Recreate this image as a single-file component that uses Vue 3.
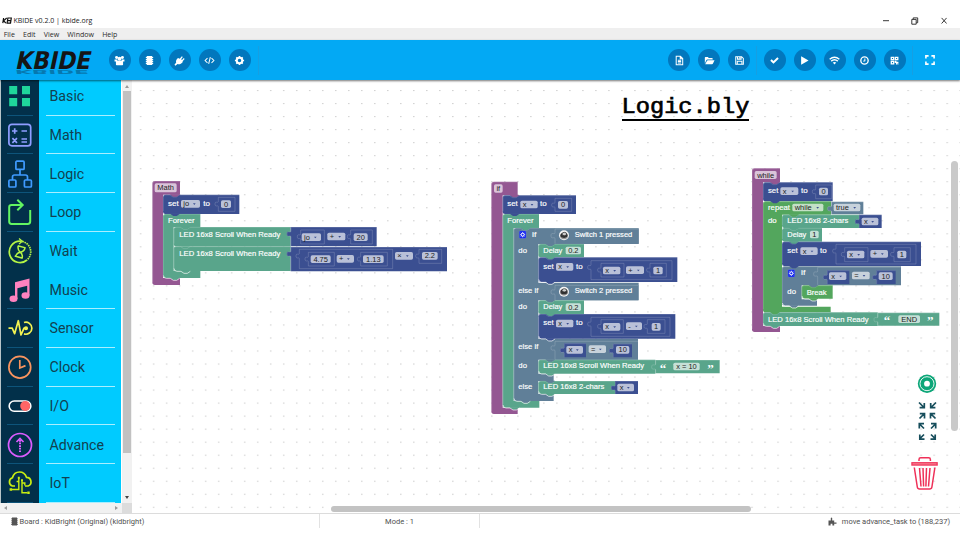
<script setup>
const P = '#945792', N = '#3b4f91', G = '#59a58b', S = '#607f98', L = '#53a65d'

const categories = ['Basic', 'Math', 'Logic', 'Loop', 'Wait', 'Music', 'Sensor', 'Clock', 'I/O', 'Advance', 'IoT']
const menus = ['File', 'Edit', 'View', 'Window', 'Help']

// Shape builders, in third-of-a-pixel units
const tab = (x, y, c) => ({ k: 'path', c, d: `M${x + 22} ${y - 1} h28 v1 l-9 6 h-10 l-9 -6 z` })
const frame = (x, y, r, iy, ix, ib, b, fr, c) => [
  { k: 'path', c, d: `M${x + 8} ${y} H${r} V${iy} H${ix} V${ib} H${fr} V${b} H${x + 8} q-8 0 -8 -8 V${y + 8} q0 -8 8 -8 z` },
  { k: 'edge', d: `M${x + 1} ${b - 9} V${y + 8} q0 -7 7 -7 H${r}` },
]
const stmt = (x, y, r, b, c) => [
  { k: 'path', c, d: `M${x + 7} ${y} H${r} V${b} H${x + 7} q-7 0 -7 -7 V${y + 7} q0 -7 7 -7 z` },
  { k: 'edge', d: `M${x + 1} ${b - 8} V${y + 7} q0 -6 6 -6 h14 l9 6 h10 l9 -6 H${r}` },
]
const val = (x, y, r, b, c) => [
  { k: 'path', c, d: `M${x} ${y} H${r} V${b} H${x} V${y + 30} c0 -8 -12 4 -12 -9 s12 -1 12 -9 z` },
  { k: 'edge', d: `M${x + 1} ${b} V${y + 30} c0 -8 -12 4 -12 -9 s12 -1 12 -9 V${y + 1} H${r}` },
]
const slot = (x, y, r, b) => [{ k: 'edge', d: `M${x} ${y} H${r} V${b} H${x} V${y + 28} c0 -6 -10 3 -10 -8 s10 -1 10 -8 z` }]
const txt = (x, y, t, w) => [{ k: 'txt', x, y, t, w }]
const fld = (x, y, w, t, arrow = false, h = 23) => [{ k: 'fld', x, y, w, t, arrow, h }]
const lip = (x, y) => [{ k: 'lip', d: `M${x + 1} ${y - 9} q1 9 9 9 h12 l9 6 h10 l9 -6` }]
const gear = (x, y) => [{ k: 'gear', x, y }]
const sw = (x, y) => [{ k: 'sw', x, y }]
const quotes = (x1, x2, y) => [{ k: 'quote', x: x1, y, t: '“' }, { k: 'quote', x: x2, y, t: '”' }]

const mathStack = [
  frame(22, 33, 105, 74, 54, 324, 345, 105, P), fld(29, 40, 66, 'Math', false, 27),
  stmt(54, 74, 283, 132, N), txt(69, 107, 'set', 32), fld(108, 90, 57, 'jo', true), txt(175, 107, 'to', 20),
  slot(220, 82, 270, 124), fld(228, 91, 30, '0'),
  frame(54, 132, 166, 171, 86, 303, 324, 166, G), txt(69, 159, 'Forever', 80),
  stmt(86, 171, 437, 229, G), txt(103, 200, 'LED 16x8 Scroll When Ready', 303),
  stmt(86, 229, 437, 303, G), txt(103, 257, 'LED 16x8 Scroll When Ready', 303),
  val(437, 171, 695, 229, N), slot(467, 180, 538, 222), fld(470, 190, 58, 'jo', true), fld(547, 188, 54, '+', true), slot(617, 180, 682, 222), fld(626, 190, 42, '20'),
  val(437, 231, 906, 304, N), slot(463, 238, 743, 296), slot(490, 247, 568, 288), fld(497, 256, 60, '4.75'), fld(575, 255, 52, '+', true),
  slot(647, 247, 727, 288), fld(654, 256, 62, '1.13'), fld(750, 246, 54, '×', true), slot(822, 238, 890, 280), fld(831, 246, 47, '2.2'),
  tab(54, 74, P), tab(54, 132, N), tab(86, 171, G), tab(86, 303, G), tab(54, 324, G), lip(86, 304), lip(54, 325),
].flat()

const ifStack = [
  frame(19, 20, 98, 61, 53, 698, 717, 98, P), fld(27, 28, 26, 'if', false, 25),
  stmt(53, 61, 273, 117, N), txt(67, 94, 'set', 31), fld(106, 77, 52, 'x', true), txt(165, 94, 'to', 20), slot(210, 70, 260, 109), fld(219, 78, 30, '0'),
  frame(53, 117, 162, 159, 86, 678, 698, 163, G), txt(67, 145, 'Forever', 79),
  { k: 'path', c: S, d: 'M93 159 H461 V207 H160 V323 H461 V376 H160 V491 H459 V554 H160 V596 H206 V618 H160 V657 H206 V678 H93 q-7 0 -7 -7 V166 q0 -7 7 -7 z' },
  { k: 'edge', d: 'M87 670 V166 q0 -6 6 -6 h14 l9 6 h10 l9 -6 H461' },
  gear(103, 168), txt(141, 187, 'if', 13), val(209, 161, 461, 206, S), sw(237, 181), txt(269, 187, 'Switch 1 pressed', 173),
  txt(100, 233, 'do', 26), stmt(160, 207, 297, 247, G), txt(175, 234, 'Delay', 57), fld(242, 215, 46, '0.2'),
  stmt(160, 247, 577, 321, N), txt(175, 281, 'set', 31), fld(213, 264, 52, 'x', true), txt(273, 281, 'to', 20),
  slot(318, 257, 561, 314), slot(348, 265, 417, 306), fld(354, 275, 52, 'x', true), fld(423, 274, 54, '+', true), slot(495, 265, 544, 306), fld(505, 275, 28, '1'),
  txt(100, 354, 'else if', 60), val(209, 330, 460, 376, S), sw(237, 350), txt(269, 354, 'Switch 2 pressed', 173),
  txt(100, 402, 'do', 26), stmt(160, 376, 297, 417, G), txt(175, 403, 'Delay', 57), fld(242, 385, 46, '0.2'),
  stmt(160, 417, 571, 491, N), txt(175, 451, 'set', 31), fld(213, 434, 52, 'x', true), txt(273, 451, 'to', 20),
  slot(318, 427, 555, 484), slot(348, 434, 415, 475), fld(354, 444, 52, 'x', true), fld(423, 442, 48, '-', true), slot(487, 434, 540, 475), fld(500, 444, 27, '1'),
  txt(100, 522, 'else if', 60), val(209, 498, 459, 554, S), val(237, 505, 303, 547, N), fld(244, 513, 50, 'x', true), fld(311, 511, 52, '=', true),
  val(384, 506, 441, 547, N), fld(393, 513, 40, '10'),
  txt(100, 578, 'do', 26), stmt(160, 554, 511, 596, G), txt(175, 580, 'LED 16x8 Scroll When Ready', 302), val(511, 555, 704, 595, G), quotes(524, 667, 593), fld(565, 563, 79, 'x = 10'),
  txt(100, 641, 'else', 42), stmt(160, 618, 391, 657, G), txt(175, 643, 'LED 16x8 2-chars', 183), val(390, 618, 459, 657, N), fld(397, 626, 50, 'x', true),
  tab(53, 61, P), tab(53, 117, N), tab(86, 159, G), tab(160, 207, S), tab(160, 247, G), tab(160, 321, N), tab(160, 376, S), tab(160, 417, G), tab(160, 491, N),
  tab(160, 554, S), tab(160, 596, G), tab(160, 618, S), tab(160, 657, G), tab(86, 678, S), tab(53, 698, G),
  lip(160, 322), lip(160, 492), lip(160, 597), lip(160, 658), lip(86, 679), lip(53, 699),
].flat()

const whileStack = [
  frame(21, 25, 105, 67, 54, 498, 516, 105, P), fld(29, 33, 66, 'while', false, 24),
  stmt(54, 67, 263, 124, N), txt(69, 99, 'set', 31), fld(106, 82, 54, 'x', true), txt(168, 99, 'to', 20), slot(212, 75, 260, 116), fld(222, 83, 27, '0'),
  frame(54, 124, 258, 164, 111, 440, 457, 257, L), tab(54, 124, N), txt(69, 149, 'repeat', 66), fld(142, 131, 93, 'while', true), val(259, 125, 355, 163, S), fld(266, 131, 80, 'true', true),
  txt(69, 189, 'do', 26), stmt(111, 164, 343, 204, G), txt(127, 190, 'LED 16x8 2-chars', 183), val(342, 164, 410, 204, N), fld(350, 173, 50, 'x', true),
  stmt(111, 204, 231, 245, G), txt(127, 231, 'Delay', 57), fld(195, 212, 26, '1'),
  stmt(111, 245, 528, 318, N), txt(127, 279, 'set', 31), fld(166, 262, 52, 'x', true), txt(225, 279, 'to', 20),
  slot(273, 253, 513, 312), slot(299, 263, 369, 305), fld(306, 272, 52, 'x', true), fld(376, 270, 53, '+', true), slot(447, 263, 496, 305), fld(457, 272, 27, '1'),
  frame(111, 319, 468, 376, 170, 418, 437, 216, S), gear(129, 329), txt(168, 345, 'if', 13), val(217, 321, 468, 375, S),
  val(246, 331, 313, 372, N), fld(252, 337, 52, 'x', true), fld(321, 335, 53, '=', true), val(394, 331, 452, 372, N), fld(401, 337, 42, '10'),
  txt(127, 403, 'do', 26), stmt(170, 376, 263, 416, L), txt(185, 404, 'Break', 60),
  stmt(54, 457, 398, 498, G), txt(69, 485, 'LED 16x8 Scroll When Ready', 302), val(398, 458, 583, 497, G), quotes(416, 546, 494), fld(460, 466, 65, 'END'),
  tab(54, 67, P), tab(111, 164, L), tab(111, 204, G), tab(111, 245, G), tab(111, 319, N), tab(170, 376, S), tab(170, 416, L), tab(111, 437, S), tab(54, 457, L), tab(54, 498, G),
  lip(170, 417), lip(111, 438), lip(54, 499),
].flat()

const stacks = [
  { id: 'math', x: 145, y: 170, items: mathStack },
  { id: 'if', x: 485, y: 175, items: ifStack },
  { id: 'while', x: 745, y: 160, items: whileStack },
]
</script>

<template>
  <div class="app">
    <header class="titlebar">
      <svg class="mark" width="10" height="7" viewBox="0 0 10 7"><path d="M1.600 1 .8 6.200M4.700 1 1.600 3.700 3.900 6.200M5.900 1 5.100 6.200H8.500L9.300 1zM5.600 3.600H9" fill="none" stroke="#111" stroke-width="1.200" /></svg>
      <span class="app-name">KBIDE v0.2.0 | kbide.org</span>
      <svg class="win" width="64" height="8" viewBox="0 0 64 8" fill="none" stroke="#222" stroke-width=".9">
        <path d="M0 3.700H6M28.800 2.400h4.400v4.800h-4.400zM30.200 2.200V.9h4.500v4.800h-1.300M58.600.9l5 5.600M63.600.9l-5 5.600" />
      </svg>
    </header>
    <nav class="menubar"><span v-for="m in menus" :key="m">{{ m }}</span></nav>

    <div class="toolbar">
      <svg class="logo" width="84" height="34" viewBox="0 0 84 34">
        <g font-family="DejaVu Sans, sans-serif" font-weight="700" font-size="24.500">
          <text transform="translate(1.500 27) skewX(12) scale(1 -.22)" fill="#0b3d5c" opacity=".45" textLength="74" lengthAdjust="spacingAndGlyphs">KBIDE</text>
          <text transform="translate(1.800 26.300) skewX(-12)" fill="#151515" textLength="75" lengthAdjust="spacingAndGlyphs">KBIDE</text>
        </g>
      </svg>
      <div class="group left">
        <i class="btn"><svg viewBox="0 0 12 12"><circle cx="2.800" cy="2.700" r="1.600" /><circle cx="9.200" cy="2.700" r="1.600" /><circle cx="6" cy="4" r="2.200" /><path d="M.6 4.800h2.700l.6 1.400h4.200l.6-1.400h2.700v2.400H9.900v3.200q0 .8-.8.8H2.900q-.8 0-.8-.8V7.200H.6z" /></svg></i>
        <i class="btn"><svg viewBox="0 0 12 12"><path d="M3 1.200h6v9.600H3zM2 2.200h8v1.200H2zM2 4.300h8v1.200H2zM2 6.400h8v1.200H2zM2 8.500h8v1.200H2z" /></svg></i>
        <i class="btn"><svg viewBox="0 0 12 12"><path d="M4.400 3.300 6.200 4 8.600 1.400l1 .9L7.800 4.600l.9.8 2-2 .9.9-2.200 2.400.2.8C7.800 9.600 5.600 10.600 3.800 9.700L1.600 11.600.5 10.500l1.900-2.200C1.700 6.600 2.600 4.600 4.400 3.300z" /></svg></i>
        <i class="btn"><svg viewBox="0 0 12 12"><path class="line" d="M3.800 3.400 1.200 6l2.600 2.600M8.200 3.400 10.800 6 8.200 8.600M6.900 2.400 5.100 9.600" /></svg></i>
        <i class="btn"><svg viewBox="0 0 12 12"><circle class="cog" cx="6" cy="6" r="3" /><path class="teeth" d="M6 1v2M6 9v2M1 6h2M9 6h2M2.500 2.500l1.400 1.400M8.100 8.100l1.400 1.400M2.500 9.500l1.400-1.400M8.100 3.900l1.400-1.400" /></svg></i>
        <b class="sep"></b>
      </div>
      <div class="group right">
        <i class="btn"><svg viewBox="0 0 12 12"><path class="line" d="M2.400 1.400h4.600l2.500 2.500v6.700H2.400zM6.800 1.500V4h2.600M4.200 5.600h3.600M4.200 7.100h3.600M4.200 8.600h3.600" /></svg></i>
        <i class="btn"><svg viewBox="0 0 12 12"><path d="M.9 9.200V3q0-.8.8-.8h2.500l1 1h3.500q.8 0 .8.8v1H3.600q-.7 0-1.100.6zM1.300 10l2-3.700q.3-.5.900-.5h7.300L9.800 9.400q-.3.6-1 .6z" /></svg></i>
        <i class="btn"><svg viewBox="0 0 12 12"><path class="line" d="M1.900 1.900h6.400l1.900 1.900v6.400H1.900zM3.800 2v2.500h4V2M3.600 10V6.900h5V10" /><path d="M5.800 2.200h1.300v1.800H5.800z" /></svg></i>
        <b class="sep mid"></b>
        <i class="btn"><svg viewBox="0 0 12 12"><path d="m1.400 6.200 1.500-1.500 2 1.900 4.200-4.100 1.500 1.500-5.700 5.600z" /></svg></i>
        <i class="btn"><svg viewBox="0 0 12 12"><path d="M2.300 1.300 10.400 6l-8.100 4.700z" /></svg></i>
        <i class="btn"><svg viewBox="0 0 12 12"><path class="wave" d="M.7 4.700q5.300-4.500 10.600 0M2.400 6.700q3.600-3 7.200 0" /><path d="M4.100 8.300Q6 6.800 7.900 8.300L6 10.400z" /></svg></i>
        <i class="btn"><svg viewBox="0 0 12 12"><circle class="wave" cx="6" cy="6" r="4" /><path class="line" d="M6.400 3.700v2.600l-1.700.4" /></svg></i>
        <i class="btn"><svg viewBox="0 0 12 12"><path fill-rule="evenodd" d="M1.800 1.800h4v4h-4zM3.200 3.200v1.200h1.200V3.200zM6.300 1.800h4v4h-4zM7.700 3.200v1.200h1.200V3.200zM1.800 6.300h4v4h-4zM3.200 7.700v1.200h1.200V7.700zM6.300 6.300h1.800v1h2.200v1.900H9v1.100H7.700V8.800H6.300zM9.400 9.500h.9v.8h-.9z" /></svg></i>
        <b class="sep"></b>
        <svg class="full" width="10" height="10" viewBox="0 0 10 10"><path d="M.9 3.600V.9h2.700M6.400.9h2.700v2.700M9.100 6.400v2.700H6.400M3.600 9.100H.9V6.400" fill="none" stroke="#fff" stroke-width="1.600" /></svg>
      </div>
    </div>

    <main class="body">
      <aside class="side">
        <div class="side-main">
          <div class="list">
            <div v-for="c in categories" :key="c" class="row">
              <div class="icon">
                <svg width="26" height="28" viewBox="0 0 26 28" fill="none" stroke-width="1.700">
                  <g v-if="c === 'Basic'" fill="#1fd69b"><path d="M2.200 4h8v8.300h-8zM15 4h8v8.300h-8zM2.200 16h8v8.300h-8zM15 16h8v8.300h-8z" /></g>
                  <g v-else-if="c === 'Math'" stroke="#8f9dff"><rect x="1.900" y="3.300" width="21.800" height="21.600" rx="3" /><path d="M5 10h5.400M7.700 7.300v5.400M14.500 10h5.500M5.400 17.200l4.600 4.600M10 17.200l-4.600 4.600M14.500 18h5.500M14.500 21h5.500" /></g>
                  <g v-else-if="c === 'Logic'" stroke="#3f9bff"><rect x="8.900" y="1.200" width="8.200" height="8.200" rx="1" /><rect x="1.900" y="20" width="7" height="7" rx="1" /><rect x="17.400" y="20" width="7" height="7" rx="1" /><path d="M13 9.500v5.500M5.500 20v-3q0-2 2-2h11q2 0 2 2v3" /></g>
                  <g v-else-if="c === 'Loop'" stroke="#63f562" stroke-width="2"><path d="M15 7H4.500Q2.200 7 2.200 9.300v14.200q0 2.400 2.300 2.400h16.200q2.500 0 2.500-2.400V12" /><path d="M10.300 1.800 15.700 7l-5.400 5.200" /></g>
                  <g v-else-if="c === 'Wait'" stroke="#b5f545"><path d="M13 4.200A10.700 10.700 0 1 0 20 23" /><path d="M13 4.200A10.700 10.700 0 0 1 20 23" stroke-dasharray="1.500 .8" /><path d="m12 1.500 3.300 2.800-3.300 2.800" stroke-width="1.300" /><path d="m10.700 8.700 8 2.200M7.700 19l8 2.200M11.200 9.200q-.8 3.800 2 6-3.700.8-4.500 4.200M18 11q-1 3.800-4.800 4.200 2.700 2 2 5.600" stroke-width="1.500" /></g>
                  <g v-else-if="c === 'Music'" fill="#ff82bf"><ellipse cx="6.500" cy="22.700" rx="4" ry="3.300" /><ellipse cx="18.500" cy="19.500" rx="4" ry="3.300" /><path d="M8 6.200 22.500 2.600v17h-2.300V9.800L10.400 12.300V23H8z" /></g>
                  <g v-else-if="c === 'Sensor'" stroke="#f3f352"><path d="M1.500 14.200h3.700l2.400 5.500 3.700-13L14 21l3-6.800h3" stroke-linejoin="round" /><circle cx="19" cy="14.200" r="1.200" fill="#f3f352" /><path d="M17 8.500a6 6 0 1 1 0 11.400" /></g>
                  <g v-else-if="c === 'Clock'" stroke="#f9945f"><circle cx="12.800" cy="14.200" r="10.900" /><path d="M12.800 7v8l5.700-2.400" /></g>
                  <g v-else-if="c === 'I/O'" stroke="#fff"><rect x="2.200" y="9" width="21.600" height="10.200" rx="5" stroke-width="1.600" /><circle cx="18.200" cy="14" r="5" fill="#ff6565" stroke="none" /></g>
                  <g v-else-if="c === 'Advance'" stroke="#dc5cff"><circle cx="13" cy="14" r="11.500" /><path d="M13 9v13" stroke-dasharray="1.700 .9" stroke-width="2" /><path d="M9.500 11 13 7.500l3.500 3.500" /></g>
                  <g v-else stroke="#c9ee12" stroke-width="1.400"><path d="M8 17H5.500A4.300 4.300 0 0 1 5.400 8.800Q7 3 12.500 3q5.200 0 7 5.300a4.500 4.500 0 0 1 1.600 8.700H18" stroke-width="1.700" /><path d="M11.800 9v11.500H4.500M15 11.500v12.300h5.500M11.800 12.500H9.600M15.500 14h2.300v2.500" /><path d="M2.600 19.300h2.500v2.500H2.600zM20.300 22.600h2.400V25h-2.400zM10.800 7.800h2v2h-2zM14 10.300h2v2h-2z" fill="#c9ee12" stroke="none" /></g>
                </svg>
              </div>
              <div class="name"><span>{{ c }}</span></div>
            </div>
          </div>
          <div class="vbar"><i class="up"></i><i class="thumb"></i><i class="down"></i></div>
        </div>
        <div class="hbar"><i class="lf"></i><i class="rt"></i><i class="corner"></i></div>
      </aside>

      <section class="canvas">
        <svg class="blocks" width="828" height="433" viewBox="132 80 828 433">
          <defs>
            <pattern id="dots" x="9.700" y="12" width="13.010" height="13.020" patternUnits="userSpaceOnUse"><rect width="1.500" height="1" fill="#cdcdcd" /></pattern>
          </defs>
          <rect x="132" y="80" width="828" height="433" fill="url(#dots)" />
          <g v-for="s in stacks" :key="s.id" :transform="`translate(${s.x} ${s.y}) scale(.33333)`">
            <template v-for="(b, i) in s.items" :key="i">
              <path v-if="b.k === 'path'" :d="b.d" :fill="b.c" />
              <path v-else-if="b.k === 'edge'" :d="b.d" class="edge" />
              <path v-else-if="b.k === 'lip'" :d="b.d" class="lip" />
              <text v-else-if="b.k === 'txt'" :x="b.x" :y="b.y" :textLength="b.w" lengthAdjust="spacingAndGlyphs" class="label">{{ b.t }}</text>
              <text v-else-if="b.k === 'quote'" :x="b.x" :y="b.y" class="quote">{{ b.t }}</text>
              <g v-else-if="b.k === 'fld'">
                <rect :x="b.x" :y="b.y" :width="b.w" :height="b.h" rx="5" class="field" />
                <text v-if="b.arrow" :x="b.x + 7" :y="b.y + 19" class="ftext">{{ b.t }}</text>
                <text v-else :x="b.x + b.w / 2" :y="b.y + b.h / 2 + 8" text-anchor="middle" class="ftext">{{ b.t }}</text>
                <path v-if="b.arrow" :d="`M${b.x + b.w - 21} ${b.y + 10} h8 l-4 5 z`" fill="#3b4f91" />
              </g>
              <g v-else-if="b.k === 'gear'" :transform="`translate(${b.x} ${b.y})`">
                <rect width="20" height="22" rx="3" fill="#1424ee" stroke="#5d70ff" />
                <circle cx="10" cy="11" r="4.500" fill="none" stroke="#fff" stroke-width="3" />
                <path d="M10 3v4M10 15v4M2.500 11h3M14.500 11h3M4.500 5.500l2 2M13.500 14.500l2 2M4.500 16.500l2-2M13.500 7.500l2-2" stroke="#fff" stroke-width="2" />
              </g>
              <g v-else :transform="`translate(${b.x} ${b.y})`">
                <circle r="15" fill="#f4f4f4" /><path d="M-12 1q0 10 12 11 12-1 12-10L6 7-5 7z" fill="#999" />
                <ellipse cx="0" cy="0" rx="11" ry="8" fill="#333" /><ellipse cx="1" cy="-4" rx="7" ry="5" fill="#ccc" stroke="#222" stroke-width="2" />
              </g>
            </template>
          </g>
          <g transform="translate(927 383.700)"><circle r="9.200" fill="#0ca678" /><circle r="7" fill="none" stroke="#fff" stroke-width=".9" /><circle r="2.900" fill="#fff" /></g>
          <g fill="none" stroke="#174e5c" stroke-width="1.700">
            <path d="M919 402.500l4.500 4.500M924.300 403v4.700h-4.700M936 402.500l-4.500 4.500M930.700 403v4.700h4.700" />
            <path d="M919.500 418.500l4.500-4.500M919.800 413.700h4.700v4.700M935.500 418.500l-4.500-4.500M930.500 418.400v-4.700h4.700" />
            <path d="M924 428.500l-4.500-4.500M919.300 428.400v-4.700h4.700M931 428.500l4.500-4.500M931 423.700h4.700v4.700" />
            <path d="M924 434.500l-4.500 4.500M919.800 434.500v4.700h4.700M931 434.500l4.500 4.500M935.200 434.500v4.700h-4.700" />
          </g>
          <g fill="none" stroke="#ef3058" stroke-width="1.500">
            <path d="M919 461v-1.500q0-1.700 1.700-1.700h8q1.700 0 1.700 1.700v1.500M914.300 467.500l3 19.500q.3 2 2.300 2h10q2 0 2.300-2l3-19.500M919.500 468l1.500 18.500M923 468l.6 18.500M926.500 468l-.6 18.500M930 468l-1.500 18.500" />
            <path d="M911.300 463.900h26.500" stroke-width="3.600" /><path d="M912.500 463.900h24" stroke="#fbb" stroke-width=".7" />
          </g>
        </svg>
        <h1 class="file"><span>Logic.bly</span></h1>
        <i class="ws-v"></i>
        <i class="ws-h"></i>
      </section>
    </main>

    <footer class="status">
      <div class="cell board"><svg width="7" height="9" viewBox="0 0 7 9"><path d="M1 .5h5v8H1zM0 1.500h7v.8H0zM0 3.500h7v.8H0zM0 5.500h7v.8H0zM0 7h7v.8H0z" fill="#555" /></svg><span>Board : KidBright (Original) (kidbright)</span></div>
      <div class="cell mode"><span>Mode : 1</span></div>
      <div class="cell info"><svg width="9" height="9" viewBox="0 0 9 9"><path d="M.5 3.500h2.300V1q.7-.8 1.400 0v2.500h2V5.600h2.300v1.200H6.200v1.800H4.400V6.800H2.600v1.800H.5z" fill="#555" /></svg><span>move advance_task to (188,237)</span></div>
    </footer>
  </div>
</template>

<style>
body { overflow: hidden; background: #fff; }
</style>
<style scoped>
.app { width: 960px; height: 540px; display: flex; flex-direction: column; background: #fff; font-family: Roboto, sans-serif; overflow: hidden; }
.titlebar { height: 28px; flex: none; display: flex; align-items: flex-end; box-sizing: border-box; padding: 0 13px 2.500px 1.500px; font: 7px/10px "Open Sans", sans-serif; color: #222; }
.mark { margin: 0 2px 1.500px 0; }
.app-name { flex: 1; }
.win { margin-bottom: 1px; }
.menubar { height: 12px; flex: none; display: flex; gap: 8.200px; padding-left: 3.700px; background: #efefef; font: 7.050px/12px "Open Sans", sans-serif; color: #2b2b2b; }
.toolbar { height: 40px; flex: none; background: #03a9f4; display: flex; align-items: center; box-shadow: 0 1px 2px rgba(0, 0, 0, .55); position: relative; z-index: 2; padding-left: 13px; box-sizing: border-box; }
.logo { flex: none; }
.group { display: flex; align-items: center; gap: 8px; }
.left { margin-left: 11.700px; flex: 1; }
.right { padding-right: 25px; }
.btn { width: 22px; height: 22px; border-radius: 50%; background: #0277bd; display: flex; align-items: center; justify-content: center; }
.btn svg { width: 11px; height: 11px; fill: #fff; }
.btn .line { fill: none; stroke: #fff; stroke-width: 1.100; }
.btn .wave { fill: none; stroke: #fff; stroke-width: 1.500; }
.btn .cog { fill: none; stroke: #fff; stroke-width: 2.200; }
.btn .teeth { fill: none; stroke: #fff; stroke-width: 1.800; }
.sep { width: 1px; height: 29px; background: #169fe2; margin-left: -2px; }
.sep.mid { margin-right: -1.500px; }
.left .sep { margin-left: -1px; }
.full { margin-left: 4.500px; }
.body { height: 433px; flex: none; display: flex; }
.side { width: 132px; flex: none; display: flex; flex-direction: column; }
.side-main { height: 423px; display: flex; overflow: hidden; }
.list { width: 120px; margin-top: -3.200px; padding-left: 1px; background: #b8c4c8; flex: none; }
.row { height: 38.720px; display: flex; }
.icon, .name { box-sizing: border-box; display: flex; align-items: center; position: relative; }
.icon { width: 38px; background: #02304a; justify-content: center; }
.name { width: 82px; background: #00cbff; padding-left: 10.500px; font-size: 14.200px; color: #124150; }
.icon::after, .name::after { content: ""; position: absolute; bottom: -.700px; height: 1.500px; }
.icon::after { left: 6px; right: 6px; background: #0d547a; }
.name::after { left: 6.500px; right: 6px; background: #a9eeff; }
.vbar { margin-left: 1px; width: 10px; flex: none; background: #f1f1f1; display: flex; flex-direction: column; align-items: center; }
.vbar .up { margin: 5px 0 3px; border: 2px solid transparent; border-top: 0; border-bottom: 3px solid #999; }
.vbar .thumb { width: 8.500px; height: 362px; background: #c1c1c1; }
.vbar .down { margin-top: 43px; border: 2px solid transparent; border-bottom: 0; border-top: 3px solid #444; }
.hbar { height: 10px; background: #f1f1f1; display: flex; align-items: center; }
.hbar .lf { margin-left: 4px; border: 2px solid transparent; border-left: 0; border-right: 3px solid #999; }
.hbar .rt { margin-left: 108px; border: 2px solid transparent; border-right: 0; border-left: 3px solid #999; }
.hbar .corner { margin-left: auto; width: 10px; height: 10px; background: #dcdcdc; }
.canvas { flex: 1; position: relative; overflow: hidden; }
.blocks { display: block; }
.edge { fill: none; stroke: #fff; stroke-opacity: .27; stroke-width: 1.800; }
.lip { fill: none; stroke: #fff; stroke-opacity: .8; stroke-width: 2.500; }
.label { font: 23.500px "Liberation Sans", sans-serif; fill: #fff; stroke: #fff; stroke-width: .5; }
.ftext { font: 22.500px "Liberation Sans", sans-serif; fill: #222; }
.quote { font: bold 39px "Liberation Serif", serif; fill: #fff; }
.field { fill: #fff; fill-opacity: .65; }
.file { position: absolute; left: 489.500px; top: 13px; margin: 0; height: 26px; border-bottom: 2px solid #000; font: 23.700px/27px "Liberation Mono", monospace; -webkit-text-stroke: .7px #000; color: #000; }
.file span { display: inline-block; transform: scaleY(.9); transform-origin: 0 75%; }
.ws-v { position: absolute; left: 819px; top: 81px; width: 6.500px; height: 270px; border-radius: 4px; background: #c9c9c9; }
.ws-h { position: absolute; left: 199px; top: 425.500px; width: 420px; height: 6.500px; border-radius: 4px; background: #c3c3c3; }
.status { height: 27px; flex: none; box-sizing: border-box; border-top: 1px solid #dcdcdc; display: flex; font-size: 7.500px; line-height: 10px; color: #4f4f4f; }
.cell { display: flex; align-items: flex-start; box-sizing: border-box; padding-top: 3px; gap: 2px; height: 14px; }
.board { width: 320px; padding-left: 10.500px; border-right: 1px solid #e2e2e2; }
.mode { width: 160px; justify-content: center; border-right: 1px solid #e2e2e2; }
.info { flex: 1; justify-content: flex-end; gap: 5px; padding-right: 10px; }
</style>
